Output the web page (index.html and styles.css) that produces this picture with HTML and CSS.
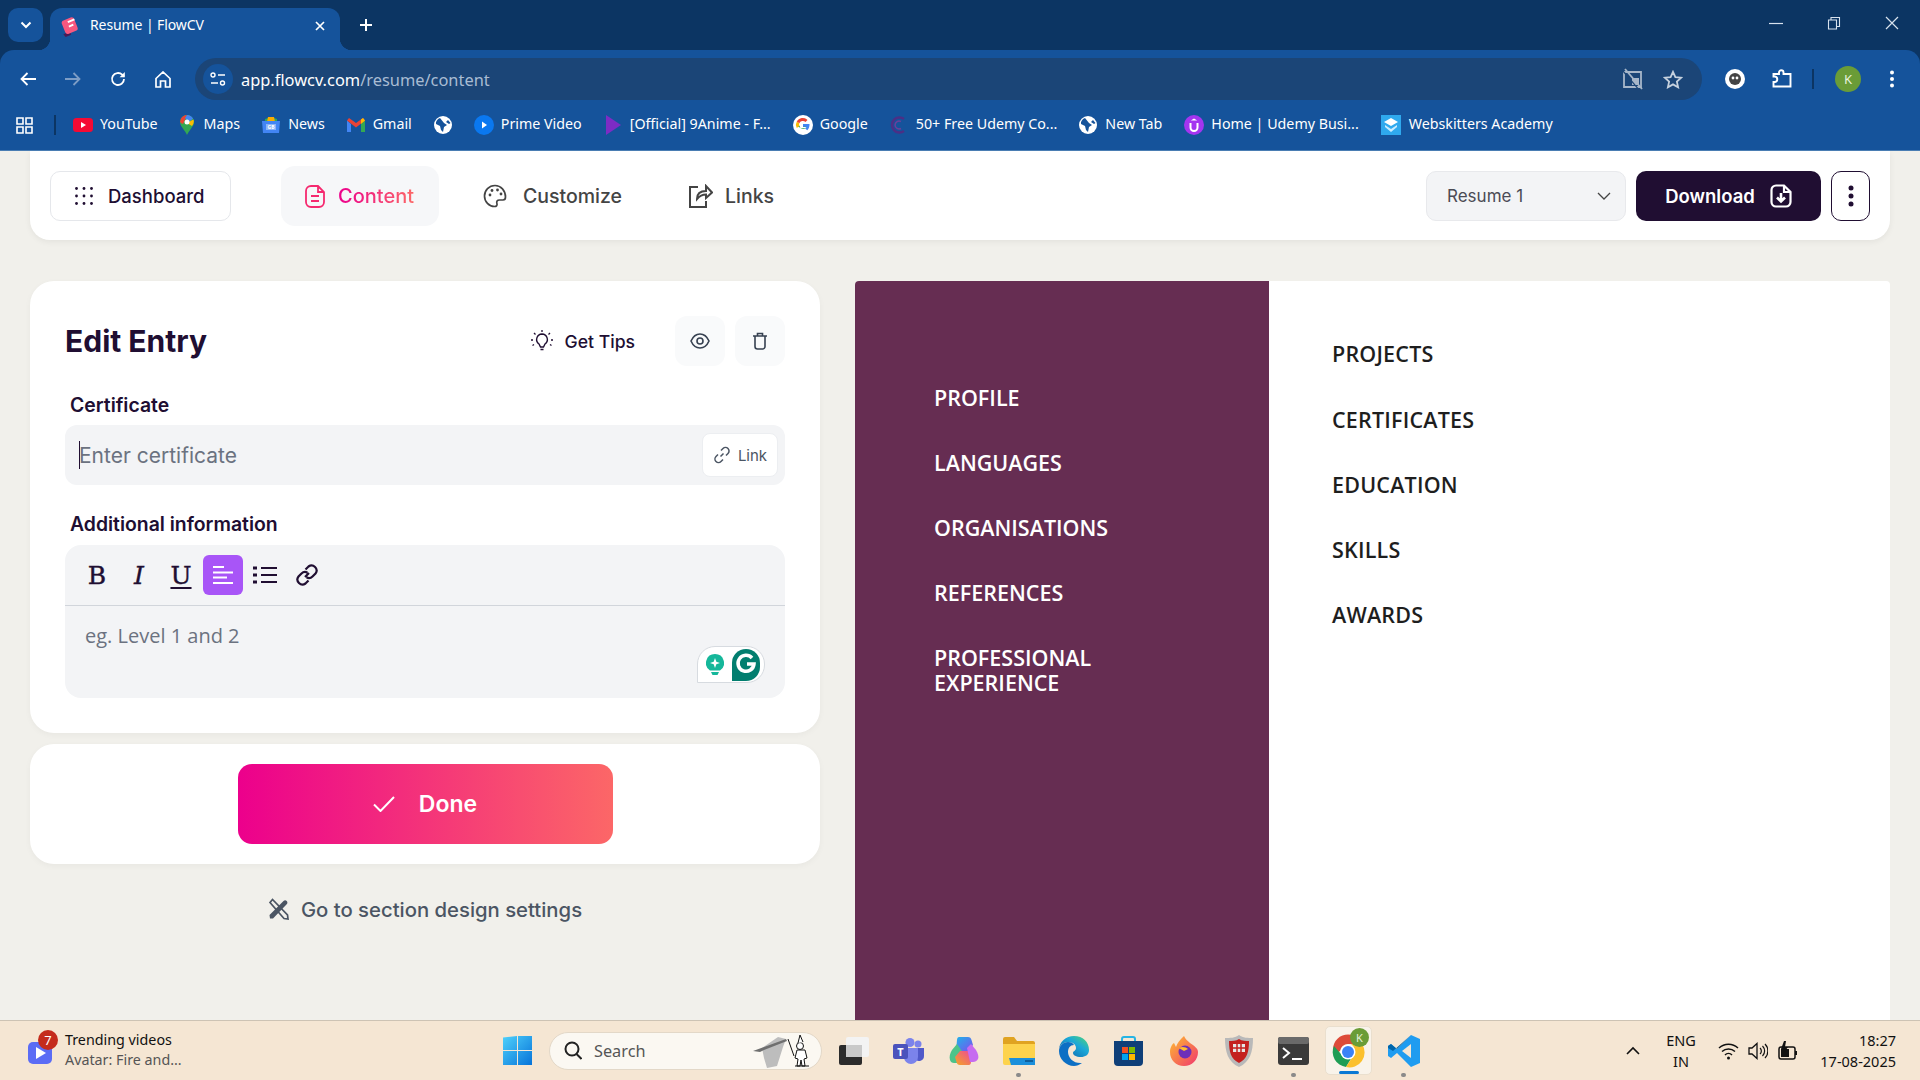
FILE: index.html
```html
<!DOCTYPE html>
<html lang="en">
<head>
<meta charset="utf-8">
<title>Resume | FlowCV</title>
<link rel="stylesheet" href="styles.css">
</head>
<body>
<div class="chrome">
  <div class="tabstrip">
    <div class="tabsearch"><svg width="12" height="8" viewBox="0 0 12 8"><path d="M1.500 1.500 6 6l4.500-4.500" fill="none" stroke="#fff" stroke-width="2"/></svg></div>
    <div class="tab">
      <svg class="favicon" width="20" height="22" viewBox="0 0 18 20"><path d="M3 17.500l6-2.500 1 3-5 2z" fill="#4a1a55"/><rect x="2.500" y="3" width="12" height="13" rx="2.500" transform="rotate(-22 9 9)" fill="#f8577f"/><path d="M7 6.500l6-2.500M8 10.500l4-1.700" stroke="#fff" stroke-width="1.800"/></svg>
      <span class="tabtitle">Resume | FlowCV</span>
      <svg class="tabclose" width="10" height="10" viewBox="0 0 10 10"><path d="M1 1l8 8M9 1 1 9" stroke="#fff" stroke-width="1.700"/></svg>
    </div>
    <svg class="newtab" width="14" height="14" viewBox="0 0 14 14"><path d="M7 1v12M1 7h12" stroke="#fff" stroke-width="2"/></svg>
    <div class="winctl">
      <svg width="14" height="14" viewBox="0 0 14 14"><path d="M0 7.500h14" stroke="#d8e2ee" stroke-width="1.200"/></svg>
      <svg width="14" height="14" viewBox="0 0 14 14"><path d="M1.500 4h8v9h-8zM4 4V1.500h8.500V10.500H9.500" fill="none" stroke="#d8e2ee" stroke-width="1.100"/></svg>
      <svg width="14" height="14" viewBox="0 0 14 14"><path d="M1 1l12 12M13 1 1 13" stroke="#d8e2ee" stroke-width="1.200"/></svg>
    </div>
  </div>
  <div class="toolbar">
    <div class="navslot"><svg width="16" height="14" viewBox="0 0 16 14"><path d="M7.500 1 1.500 7l6 6M2 7h14" fill="none" stroke="#fff" stroke-width="1.800"/></svg></div>
    <div class="navslot"><svg width="16" height="14" viewBox="0 0 16 14"><path d="M8.500 1l6 6-6 6M14 7H0" fill="none" stroke="#7d9dc5" stroke-width="1.800"/></svg></div>
    <div class="navslot"><svg width="16" height="16" viewBox="0 0 16 16"><path d="M14 8a6 6 0 1 1-1.800-4.300L14 5.500" fill="none" stroke="#fff" stroke-width="1.800"/><path d="M14.800 1v5.200H9.600z" fill="#fff"/></svg></div>
    <div class="navslot"><svg width="16" height="17" viewBox="0 0 16 17"><path d="M1 7.500 8 1l7 6.500V16h-4.500v-6h-5v6H1z" fill="none" stroke="#fff" stroke-width="1.700"/></svg></div>
    <div class="omnibox">
      <div class="siteinfo"><svg width="16" height="14" viewBox="0 0 16 14"><circle cx="3" cy="3" r="2" fill="none" stroke="#fff" stroke-width="1.400"/><path d="M8 3h7M1 11h7" stroke="#fff" stroke-width="1.500"/><circle cx="12.500" cy="11" r="2" fill="none" stroke="#fff" stroke-width="1.400"/></svg></div>
      <span class="url"><span class="urlhost">app.flowcv.com</span>/resume/content</span>
      <svg class="pip" width="22" height="22" viewBox="0 0 22 22"><path d="M2 4h17v15H2z" fill="none" stroke="#a7b6c9" stroke-width="1.800"/><path d="M10 10h7v7h-7z" fill="#a7b6c9"/><path d="M3 1l17 20" stroke="#a7b6c9" stroke-width="1.800"/><path d="M1 3l17 20" stroke="#1b4577" stroke-width="1.200"/></svg>
      <svg class="star" width="20" height="19" viewBox="0 0 20 19"><path d="M10 1.800l2.400 5.300 5.800.6-4.300 3.900 1.200 5.700L10 14.400l-5.100 2.900 1.200-5.700L1.800 7.700l5.800-.6z" fill="none" stroke="#c6d1de" stroke-width="1.800"/></svg>
    </div>
    <svg class="ext-g" width="20" height="20" viewBox="0 0 20 20"><circle cx="10" cy="10" r="10" fill="#fff"/><circle cx="10" cy="10" r="6" fill="#444"/><circle cx="8" cy="9" r="1.400" fill="#fff"/><circle cx="12" cy="9" r="1.400" fill="#fff"/></svg>
    <svg class="ext-p" width="20" height="20" viewBox="0 0 20 20"><path d="M1.500 5H7V3.500a2.200 2.200 0 0 1 4.500 0V5h7v12.500h-17V13H3a2.800 2.800 0 0 0 0-5.500H1.500z" fill="none" stroke="#fff" stroke-width="1.900"/></svg>
    <div class="tbsep"></div>
    <div class="avatar">K</div>
    <svg class="dots" width="6" height="18" viewBox="0 0 6 18"><circle cx="3" cy="2.500" r="2" fill="#fff"/><circle cx="3" cy="9" r="2" fill="#fff"/><circle cx="3" cy="15.500" r="2" fill="#fff"/></svg>
  </div>
  <div class="bookmarks">
    <svg class="apps" width="17" height="17" viewBox="0 0 17 17"><path d="M1 1h6v6H1zM10 1h6v6h-6zM1 10h6v6H1zM10 10h6v6h-6z" fill="none" stroke="#fff" stroke-width="1.600"/></svg>
    <div class="bmsep"></div>
    <div class="bmlist">
      <div class="bm bm-tight"><svg width="20" height="14" viewBox="0 0 20 14"><rect width="20" height="14" rx="3.500" fill="#f50a33"/><path d="M8 4l5 3-5 3z" fill="#fff"/></svg><span class="bmtext">YouTube</span></div>
      <div class="bm bm-wide"><svg width="14" height="20" viewBox="0 0 14 20"><path d="M7 20C5 15 0 11.500 0 7a7 7 0 0 1 14 0c0 4.500-5 8-7 13z" fill="#34a853"/><path d="M1 3.500A7 7 0 0 1 7 0l-4 9a7 7 0 0 1-3-2z" fill="#ea4335"/><path d="M7 0a7 7 0 0 1 6 3.500L9 7 5 3z" fill="#4285f4"/><path d="M13.500 4.500A7 7 0 0 1 12 11L7 8z" fill="#fbbc04"/><circle cx="7" cy="7" r="2.500" fill="#fff"/></svg><span class="bmtext">Maps</span></div>
      <div class="bm"><svg width="18" height="18" viewBox="0 0 18 18"><path d="M3 3l6-2 6 2v4H3z" fill="#34a853"/><path d="M6 1h6l1 5H5z" fill="#f9ab00"/><path d="M0 5h18l-1 12H1z" fill="#4285f4"/><path d="M4 8h10v6H4z" fill="#8ab4f8"/><text class="bmnews" x="9" y="13">GB</text></svg><span class="bmtext">News</span></div>
      <div class="bm"><svg width="18" height="14" viewBox="0 0 18 14"><path d="M0 2.500V14h4V6z" fill="#4285f4"/><path d="M14 6v8h4V2.500z" fill="#34a853"/><path d="M0 2.500 9 9.500l9-7L16 0 9 5 2 0z" fill="#ea4335"/><path d="M14 6l4-3.500L16 0l-2 1.500z" fill="#fbbc04"/></svg><span class="bmtext">Gmail</span></div>
      <div class="bm"><svg width="18" height="18" viewBox="0 0 18 18"><circle cx="9" cy="9" r="9" fill="#fff"/><path d="M6 2C3 3 1.500 6 2 8l4 2 1 4 2 2 1-5 3-2-3-2zM14 4l-2 2 3 2 1.500-1z" fill="#15539b"/></svg></div>
      <div class="bm bm-tight"><svg width="20" height="20" viewBox="0 0 20 20"><circle cx="10" cy="10" r="10" fill="#0a78f0"/><path d="M8 6.500l5 3.500-5 3.500z" fill="#fff"/></svg><span class="bmtext">Prime Video</span></div>
      <div class="bm"><svg width="18" height="20" viewBox="0 0 18 20"><path d="M2 0l15 10L2 20z" fill="#7d2cc4"/></svg><span class="bmtext">[Official] 9Anime - F...</span></div>
      <div class="bm bm-tight"><svg width="20" height="20" viewBox="0 0 20 20"><circle cx="10" cy="10" r="10" fill="#fff"/><path d="M16 9h-6v3h3.400a3.600 3.600 0 0 1-6.800-1L3.500 8.500A6.600 6.600 0 0 0 16 9z" fill="#34a853"/><path d="M16.500 9H10v2.800h3.600c-.3.800-.8 1.300-1.500 1.800l2.200 1.700c1.500-1.400 2.400-3.800 2.200-6.300z" fill="#4285f4"/><path d="M3.800 6.500a6.600 6.600 0 0 0 0 6.400L6.300 11a3.800 3.800 0 0 1 0-2.700z" fill="#fbbc04"/><path d="M3.800 6.500A6.600 6.600 0 0 1 14.500 5l-2 2a3.800 3.800 0 0 0-6.200 1.300z" fill="#ea4335"/></svg><span class="bmtext">Google</span></div>
      <div class="bm"><svg width="18" height="20" viewBox="0 0 18 20"><path d="M14 4a7.500 7.500 0 1 0 0 12" fill="none" stroke="#4b2f86" stroke-width="2.500"/><path d="M11 6.500a4 4 0 1 0 0 7" fill="none" stroke="#6a3f9c" stroke-width="1.500"/></svg><span class="bmtext">50+ Free Udemy Co...</span></div>
      <div class="bm"><svg width="18" height="18" viewBox="0 0 18 18"><circle cx="9" cy="9" r="9" fill="#fff"/><path d="M6 2C3 3 1.500 6 2 8l4 2 1 4 2 2 1-5 3-2-3-2zM14 4l-2 2 3 2 1.500-1z" fill="#15539b"/></svg><span class="bmtext">New Tab</span></div>
      <div class="bm bm-tight"><svg width="20" height="20" viewBox="0 0 20 20"><circle cx="10" cy="10" r="10" fill="#a435f0"/><path d="M6.500 8v4.500a3.500 3.500 0 0 0 7 0V8" fill="none" stroke="#fff" stroke-width="2"/><path d="M10 3.500 6.800 5.500h6.400z" fill="#fff"/></svg><span class="bmtext">Home | Udemy Busi...</span></div>
      <div class="bm"><svg width="20" height="20" viewBox="0 0 20 20"><rect width="20" height="20" fill="#2fa9ee"/><path d="M10 3l7 4-7 4-7-4z" fill="#fff"/><path d="M4 10l6 4 6-4v2l-6 5-6-5z" fill="#c9ecff"/></svg><span class="bmtext">Webskitters Academy</span></div>
    </div>
  </div>
</div>

<main class="page">
  <header class="topbar">
    <button class="dash">
      <svg width="18" height="18" viewBox="0 0 18 18"><g fill="#200e32"><circle cx="1.500" cy="1.500" r="1.400"/><circle cx="9" cy="1.500" r="1.400"/><circle cx="16.500" cy="1.500" r="1.400"/><circle cx="1.500" cy="9" r="1.400"/><circle cx="9" cy="9" r="1.400"/><circle cx="16.500" cy="9" r="1.400"/><circle cx="1.500" cy="16.500" r="1.400"/><circle cx="9" cy="16.500" r="1.400"/><circle cx="16.500" cy="16.500" r="1.400"/></g></svg>
      <span>Dashboard</span>
    </button>
    <nav class="tabs">
      <div class="navtab navtab-active">
        <svg width="20" height="23" viewBox="0 0 20 23"><path d="M13 1H6a5 5 0 0 0-5 5v11a5 5 0 0 0 5 5h8a5 5 0 0 0 5-5V7zM6 11h8M6 16h8M13 1v6h6" fill="none" stroke="#f5296f" stroke-width="1.800"/></svg>
        <span class="gradtext">Content</span>
      </div>
      <div class="navtab">
        <svg width="24" height="24" viewBox="0 0 24 24"><path d="M12 1.500C6 1.500 1.500 6.300 1.500 12S6 22.500 11.500 22.500c2 0 3-1.300 2.400-3-.6-1.800.2-3.500 2.600-3.500H20c1.600 0 2.500-1.200 2.500-3C22.500 6.500 18 1.500 12 1.500z" fill="none" stroke="#444" stroke-width="1.700"/><circle cx="7" cy="11" r="1.400" fill="#444"/><circle cx="9" cy="6.500" r="1.400" fill="#444"/><circle cx="14.500" cy="6" r="1.400" fill="#444"/><circle cx="18" cy="10" r="1.400" fill="#444"/></svg>
        <span>Customize</span>
      </div>
      <div class="navtab navtab-links">
        <svg width="25" height="25" viewBox="0 0 25 25"><path d="M10 3H2v20h16v-6" fill="none" stroke="#444" stroke-width="2"/><path d="M9 15c0-5 3-8 9-8V2l6 6.500L18 14V10.500c-4 0-6 1-9 4.500z" fill="none" stroke="#444" stroke-width="2"/></svg>
        <span>Links</span>
      </div>
    </nav>
    <div class="actions">
      <div class="select"><span>Resume 1</span><svg width="14" height="8" viewBox="0 0 14 8"><path d="M1 1l6 6 6-6" fill="none" stroke="#444" stroke-width="1.300"/></svg></div>
      <button class="download"><span>Download</span>
        <svg width="22" height="24" viewBox="0 0 22 24"><path d="M14 1.500H6A4.500 4.500 0 0 0 1.500 6v12A4.500 4.500 0 0 0 6 22.500h10a4.500 4.500 0 0 0 4.500-4.500V8zM14 1.500V8h6.500" fill="none" stroke="#fff" stroke-width="2.200"/><path d="M11 9v8M7 13.500l4 4 4-4" fill="none" stroke="#fff" stroke-width="2.600"/></svg>
      </button>
      <button class="kebab"><svg width="6" height="22" viewBox="0 0 6 22"><circle cx="3" cy="3" r="2.500" fill="#200e32"/><circle cx="3" cy="11" r="2.500" fill="#200e32"/><circle cx="3" cy="19" r="2.500" fill="#200e32"/></svg></button>
    </div>
  </header>

  <div class="workspace">
    <section class="leftcol">
      <div class="card editcard">
        <div class="edithead">
          <h1 class="edittitle">Edit Entry</h1>
          <div class="tips">
            <svg width="22" height="22" viewBox="0 0 22 22"><path d="M11 4a5.500 5.500 0 0 0-3 10l1.500 3h3L14 14a5.500 5.500 0 0 0-3-10zM9.500 19.500h3" fill="none" stroke="#200e32" stroke-width="1.400"/><path d="M11 0v2M3 3l1.500 1.500M19 3l-1.500 1.500M0 10h2M20 10h2M1.500 15.500 3 14.500M20.500 15.500 19 14.500" stroke="#200e32" stroke-width="1.300"/></svg>
            <span>Get Tips</span>
          </div>
          <button class="iconbtn"><svg width="20" height="16" viewBox="0 0 20 16"><path d="M1 8c2-4.500 5.300-7 9-7s7 2.500 9 7c-2 4.500-5.300 7-9 7s-7-2.500-9-7z" fill="none" stroke="#374151" stroke-width="1.600"/><circle cx="10" cy="8" r="3" fill="none" stroke="#374151" stroke-width="1.600"/></svg></button>
          <button class="iconbtn"><svg width="16" height="18" viewBox="0 0 16 18"><path d="M1 4h14M5.500 4V1.500h5V4M3 4v10.500A2.500 2.500 0 0 0 5.500 17h5a2.500 2.500 0 0 0 2.500-2.500V4" fill="none" stroke="#374151" stroke-width="1.600"/></svg></button>
        </div>
        <label class="fieldlabel">Certificate</label>
        <div class="inputrow">
          <span class="caret"></span><span class="placeholder">Enter certificate</span>
          <button class="linkbtn"><svg width="18" height="18" viewBox="0 0 18 18"><path d="M7.500 10.500 10.500 7.500M8 4.500l2-2a3.500 3.500 0 0 1 5 5l-2 2M10 13.500l-2 2a3.500 3.500 0 0 1-5-5l2-2" fill="none" stroke="#4b5563" stroke-width="1.500"/></svg><span>Link</span></button>
        </div>
        <label class="fieldlabel fieldlabel-second">Additional information</label>
        <div class="editor">
          <div class="edtools">
            <div class="tool tool-b">B</div>
            <div class="tool tool-i">I</div>
            <div class="tool tool-u">U</div>
            <div class="tool tool-active"><svg width="22" height="22" viewBox="0 0 22 22"><path d="M1 3h11M1 8.500h20M1 13.500h14M1 19h20" stroke="#fff" stroke-width="2.200"/></svg></div>
            <div class="tool"><svg width="24" height="20" viewBox="0 0 24 20"><path d="M0 3h4M0 10h4M0 17h4" stroke="#200e32" stroke-width="3"/><path d="M8 3h16M8 10h16M8 17h16" stroke="#200e32" stroke-width="2"/></svg></div>
            <div class="tool"><svg width="24" height="24" viewBox="0 0 24 24"><path d="M10 14l4-4M10.500 6.500l3-3a5 5 0 0 1 7 7l-3 3a5 5 0 0 1-6 .8M13.500 17.500l-3 3a5 5 0 0 1-7-7l3-3a5 5 0 0 1 6-.8" fill="none" stroke="#200e32" stroke-width="2.200"/></svg></div>
          </div>
          <div class="edbody">
            <span class="placeholder placeholder-body">eg. Level 1 and 2</span>
            <div class="grammarly">
              <svg width="18" height="22" viewBox="0 0 18 22"><path d="M9 0a9 9 0 0 0-5 16.500h10A9 9 0 0 0 9 0z" fill="#15b79a"/><path d="M9 4l1.300 3.700L14 9l-3.700 1.300L9 14l-1.300-3.700L4 9l3.700-1.300z" fill="#fff"/><path d="M5 18h8l-1.500 3h-5z" fill="#15b79a"/></svg>
              <div class="gmark"><svg width="28" height="32" viewBox="0 0 28 32"><path d="M0 32V14a14 14 0 0 1 28 0v4a14 14 0 0 1-14 14z" fill="#027e6f"/><path d="M20 9a8 8 0 1 0 2 6h-7" fill="none" stroke="#fff" stroke-width="3.500"/></svg></div>
            </div>
          </div>
        </div>
      </div>
      <div class="card donecard">
        <button class="done"><svg width="22" height="16" viewBox="0 0 22 16"><path d="M1 8.500 7.500 15 21 1" fill="none" stroke="#fff" stroke-width="2"/></svg><span>Done</span></button>
      </div>
      <div class="sectionlink">
        <svg width="21" height="22" viewBox="0 0 21 22"><path d="M2 4.500 4.500 1.500l15 15.500.5 4-4-.5z" fill="none" stroke="#4b5563" stroke-width="1.700"/><path d="M2 20.500 1.500 17 15.500 3c1-1 2.300-1 3.200 0s1 2.300 0 3.200L5 20.500z" fill="#4b5563"/></svg>
        <span>Go to section design settings</span>
      </div>
    </section>
    <section class="resume">
      <div class="resleft">
        <div class="reshead">PROFILE</div>
        <div class="reshead">LANGUAGES</div>
        <div class="reshead">ORGANISATIONS</div>
        <div class="reshead">REFERENCES</div>
        <div class="reshead">PROFESSIONAL EXPERIENCE</div>
      </div>
      <div class="resright">
        <div class="reshead">PROJECTS</div>
        <div class="reshead">CERTIFICATES</div>
        <div class="reshead">EDUCATION</div>
        <div class="reshead">SKILLS</div>
        <div class="reshead">AWARDS</div>
      </div>
    </section>
  </div>
</main>

<footer class="taskbar">
  <div class="widget">
    <div class="widgeticon">
      <svg width="24" height="22" viewBox="0 0 24 22"><rect width="24" height="22" rx="5" fill="#5b6cf5"/><path d="M8 5l10 6-10 6z" fill="#fff"/></svg>
      <span class="badge">7</span>
    </div>
    <div class="widgettext"><div class="wt1">Trending videos</div><div class="wt2">Avatar: Fire and...</div></div>
  </div>
  <div class="center">
    <svg class="winlogo" width="29" height="29" viewBox="0 0 29 29"><defs><linearGradient id="w" x1="0" y1="0" x2="1" y2="1"><stop offset="0" stop-color="#4fd1fb"/><stop offset="1" stop-color="#0673d9"/></linearGradient></defs><path d="M0 1.500 14 0v14H0zM15 0h14v14H15zM0 15h14v14H0zM15 15h14v14H15z" fill="url(#w)"/></svg>
    <div class="searchbox">
      <svg width="18" height="19" viewBox="0 0 18 19"><circle cx="8" cy="8" r="6.500" fill="none" stroke="#222" stroke-width="2"/><path d="M12.500 13 17.500 18" stroke="#222" stroke-width="2"/></svg>
      <span>Search</span>
      <svg class="searchart" width="58" height="34" viewBox="0 0 58 34"><path d="M10 14 26 3l8 2-3 8-6 19-10 2-3-10z" fill="#bdbdbd"/><path d="M1 17 34 5l1 2L12 16l-4 2z" fill="#6f6f6f"/><path d="M36 5l6 17" stroke="#111" stroke-width="1"/><circle cx="48" cy="12" r="3.500" fill="#fff" stroke="#111"/><path d="M46 9l2-8 3 7" fill="#fff" stroke="#111"/><path d="M45 16l-2 8 3 1-1 7h3l1-6 1 6h3l-1-7 3-1-2-8z" fill="#fff" stroke="#111"/><path d="M43 32h14" stroke="#111"/></svg>
    </div>
    <div class="taskicons">
      <div class="ti"><svg width="30" height="28" viewBox="0 0 30 28"><rect y="8" width="23" height="20" rx="2" fill="#2b2b2b"/><rect x="7" width="23" height="20" rx="2" fill="#f3f3f3"/><rect x="7" y="8" width="16" height="12" fill="#c9c9c9"/></svg></div>
      <div class="ti"><svg width="31" height="26" viewBox="0 0 31 26"><circle cx="25" cy="6" r="3.500" fill="#7b83eb"/><circle cx="17" cy="4.500" r="4.500" fill="#7b83eb"/><path d="M20 10h11v8a5 5 0 0 1-9 3z" fill="#5059c9"/><path d="M8 10h17v9a7 7 0 0 1-14 0z" fill="#7b83eb"/><rect y="6" width="15" height="15" rx="2" fill="#4b53bc"/><text class="tileter" x="7.500" y="17.500">T</text></svg></div>
      <div class="ti"><svg width="30" height="30" viewBox="0 0 30 30"><defs><linearGradient id="co1" x1="0" y1="0" x2="1" y2="1"><stop offset="0" stop-color="#1fb3e8"/><stop offset="1" stop-color="#7b4ff0"/></linearGradient><linearGradient id="co2" x1="0" y1="1" x2="1" y2="0"><stop offset="0" stop-color="#f5a623"/><stop offset="1" stop-color="#ec4899"/></linearGradient></defs><path d="M10 1h9c2 0 3 1 3.500 3L24 9l-5 6H7l1-11c0-2 1-3 2-3z" fill="url(#co1)"/><path d="M8 8 3 14c-2 3-3 7-2 10 .5 2 2 3 4 3h4l6-9z" fill="#4cc38a"/><path d="M20 29h-9c-2 0-3-1-3.500-3L6 21l5-6h12l-1 11c0 2-1 3-2 3z" fill="url(#co2)"/><path d="M22 8l5 6c2 3 3 7 2 9-1 2-3 3-5 3h-3l-3-14z" fill="#c66bf0"/></svg></div>
      <div class="ti ti-dot"><svg width="32" height="28" viewBox="0 0 32 28"><path d="M0 2a2 2 0 0 1 2-2h9l3 4h16a2 2 0 0 1 2 2v4H0z" fill="#e0a321"/><path d="M0 7h32v19a2 2 0 0 1-2 2H2a2 2 0 0 1-2-2z" fill="#fdd34d"/><path d="M6 21h26v7H8z" fill="#1b8fdb"/><path d="M22 24h8" stroke="#0a4f8a" stroke-width="1.500"/></svg></div>
      <div class="ti"><svg width="30" height="30" viewBox="0 0 30 30"><defs><linearGradient id="ed" x1="0" y1="1" x2="1" y2="0"><stop offset="0" stop-color="#0c59a4"/><stop offset=".6" stop-color="#1ba8d8"/><stop offset="1" stop-color="#54d96d"/></linearGradient></defs><path d="M15 0c9 0 15 6 15 14 0 5-4 7-8 7-5 0-8-2-8-4 0-2 3-2 3-5 0-4-4-6-8-6-5 0-9 4-9 8C0 6 7 0 15 0z" fill="url(#ed)"/><path d="M0 15c0-5 4-9 9-9 3 0 5 1 6 3-4 0-6 3-6 7 0 6 6 12 14 11-3 2-5 3-8 3C7 30 0 23 0 15z" fill="#0c6fc4"/></svg></div>
      <div class="ti"><svg width="29" height="30" viewBox="0 0 29 30"><path d="M8 5V3a2 2 0 0 1 2-2h9a2 2 0 0 1 2 2v2" fill="none" stroke="#26b4e4" stroke-width="2"/><path d="M0 5h29v21a4 4 0 0 1-4 4H4a4 4 0 0 1-4-4z" fill="#0f3f78"/><path d="M8 11h6v6H8z" fill="#f25022"/><path d="M15 11h6v6h-6z" fill="#7fba00"/><path d="M8 18h6v6H8z" fill="#00a4ef"/><path d="M15 18h6v6h-6z" fill="#ffb900"/></svg></div>
      <div class="ti"><svg width="28" height="30" viewBox="0 0 28 30"><defs><linearGradient id="ff" x1="0" y1="0" x2="1" y2="1"><stop offset="0" stop-color="#ffbd2e"/><stop offset="1" stop-color="#f0366f"/></linearGradient></defs><path d="M14 30C6 30 0 24 0 16 0 12 2 8 4 7l2 4c1-4 4-7 8-11 1 3 4 5 6 7 4 3 8 5 8 9 0 8-6 14-14 14z" fill="url(#ff)"/><circle cx="15" cy="16" r="6.500" fill="#6d2fb8"/><path d="M9 12c3-2 7-1 9 1l-4 2z" fill="#ffbd2e"/></svg></div>
      <div class="ti"><svg width="28" height="32" viewBox="0 0 28 32"><path d="M14 0c4 3 9 3 14 3 0 14-3 24-14 29C3 27 0 17 0 3c5 0 10 0 14-3z" fill="#b9b9b9"/><path d="M14 4c3 2 7 2 10 2 0 11-2 18-10 22C6 24 4 17 4 6c3 0 7 0 10-2z" fill="#c4201f"/><path d="M8 9h12v8H8z" fill="#e6e6e6"/><path d="M12 9v8M16 9v8M8 13h12" stroke="#c4201f" stroke-width="1.500"/></svg></div>
      <div class="ti ti-dot"><svg width="31" height="28" viewBox="0 0 31 28"><rect width="31" height="28" rx="3" fill="#3a3a3a"/><rect width="31" height="7" rx="2" fill="#6a6a6a"/><path d="M5 11l6 5-6 5" fill="none" stroke="#fff" stroke-width="2"/><path d="M14 22h10" stroke="#fff" stroke-width="2"/></svg></div>
      <div class="ti ti-active"><svg width="36" height="36" viewBox="0 0 36 36"><path d="M3 21 A15 15 0 0 1 31 10 H17 a8 8 0 0 0-8 7z" fill="#dd4b39"/><path d="M3 12a15 15 0 0 0 12 21l6-10a8 8 0 0 1-11-3z" fill="#1f9d55"/><path d="M31 10a15 15 0 0 1-16 23l7-11a8 8 0 0 0-2-12z" fill="#fbc02d"/><circle cx="17" cy="18" r="7.500" fill="#fff"/><circle cx="17" cy="18" r="6" fill="#3b82f6"/></svg><span class="kbadge">K</span></div>
      <div class="ti ti-dot"><svg width="32" height="32" viewBox="0 0 32 32"><path d="M23 0 9 14 3 9l-3 2v10l3 2 6-5 14 14 9-4V4z" fill="#1f9cf0"/><path d="M23 9v14l-9-7z" fill="#f5e6d3"/><path d="M23 0 9 14 3 9 0 11v2l5 3 18-16z" fill="#0065a9"/></svg></div>
    </div>
  </div>
  <div class="tray">
    <svg class="traycaret" width="14" height="9" viewBox="0 0 14 9"><path d="M1 8l6-6 6 6" fill="none" stroke="#111" stroke-width="1.600"/></svg>
    <div class="lang"><div>ENG</div><div>IN</div></div>
    <svg class="trayi" width="21" height="18" viewBox="0 0 21 18"><path d="M1 6a14 14 0 0 1 19 0M4 9.500a9.500 9.500 0 0 1 13 0M7 13a5 5 0 0 1 7 0" fill="none" stroke="#111" stroke-width="1.500"/><circle cx="10.500" cy="16" r="1.500" fill="#111"/></svg>
    <svg class="trayi trayi-s" width="20" height="18" viewBox="0 0 20 18"><path d="M1 6h3l5-4.500v15L4 12H1z" fill="none" stroke="#111" stroke-width="1.300"/><path d="M12 6a4 4 0 0 1 0 6M14.500 4a7 7 0 0 1 0 10M17 2a10 10 0 0 1 0 14" fill="none" stroke="#111" stroke-width="1.200"/></svg>
    <svg class="trayi trayi-b" width="20" height="20" viewBox="0 0 20 20"><rect x="1" y="6" width="16" height="12" rx="2" fill="#f5e6d3" stroke="#111" stroke-width="1.500"/><rect x="3" y="8" width="8" height="8" fill="#111"/><path d="M18 10v4" stroke="#111" stroke-width="2"/><path d="M6 0 3 8h3l-1 5 5-7H7l1-6z" fill="#111"/></svg>
    <div class="clock"><div>18:27</div><div>17-08-2025</div></div>
  </div>
</footer>
</body>
</html>
```

FILE: styles.css
```css
* { box-sizing: border-box; }
html, body { margin: 0; height: 100%; }
body {
  width: 1920px; height: 1080px; overflow: hidden;
  display: flex; flex-direction: column;
  background: #f1f0eb;
  font-family: "Inter", "Liberation Sans", sans-serif;
  color: #200e32;
}
button { font-family: inherit; border: 0; padding: 0; background: none; }
svg { display: block; flex: none; }

/* browser chrome */
.chrome { height: 151px; flex: none; background: #0c3563; border-bottom: 1px solid #4a7db3; font-family: "Noto Sans", sans-serif; color: #fff; }
.tabstrip { height: 50px; display: flex; align-items: flex-start; padding: 8px 0 0 8px; }
.tabsearch { width: 35px; height: 34px; border-radius: 10px; background: #15539b; display: flex; align-items: center; justify-content: center; }
.tab { position: relative; width: 290px; height: 42px; margin-left: 7px; background: #15539b; border-radius: 12px 12px 0 0; display: flex; align-items: center; padding: 0 15px 6px 10px; }
.tab::before, .tab::after { content: ""; position: absolute; bottom: 0; width: 12px; height: 12px; }
.tab::before { left: -12px; background: radial-gradient(circle at 0 0, transparent 12px, #15539b 12.5px); }
.tab::after { right: -12px; background: radial-gradient(circle at 100% 0, transparent 12px, #15539b 12.5px); }
.tabtitle { font-size: 14px; line-height: 18px; margin: -2px 0 0 10px; flex: 1; letter-spacing: -.1px; }
.newtab { margin: 10px 0 0 19px; }
.winctl { margin-left: auto; display: flex; gap: 44px; padding: 8px 21px 0 0; }
.toolbar { height: 50px; background: #15539b; border-radius: 14px 14px 0 0; display: flex; align-items: flex-start; padding: 8px 0 0 5px; }
.navslot { width: 45px; height: 42px; display: flex; align-items: center; justify-content: center; }
.omnibox { width: 1507px; height: 42px; margin-left: 10px; border-radius: 21px; background: #1b4577; display: flex; align-items: center; padding: 0 19px 0 8px; }
.siteinfo { width: 30px; height: 30px; border-radius: 50%; background: #15539b; display: flex; align-items: center; justify-content: center; }
.url { margin-left: 8px; font-size: 16.4px; color: #a9bcd3; }
.urlhost { color: #fff; }
.pip { margin-left: auto; }
.star { margin-left: 19px; }
.ext-g { margin: 11px 0 0 23px; }
.ext-p { margin: 11px 0 0 27px; }
.tbsep { width: 2px; height: 20px; margin: 11px 0 0 20px; background: #0c3563; }
.avatar { width: 26px; height: 26px; margin: 8px 0 0 21px; border-radius: 50%; background: #6a9c37; font-size: 13px; display: flex; align-items: center; justify-content: center; color: #e8f2dc; }
.dots { margin: 12px 0 0 28px; }
.bookmarks { height: 50px; background: #15539b; display: flex; align-items: center; padding-left: 16px; }
.bmsep { width: 2px; height: 20px; margin-left: 21px; background: #0c3563; }
.bmlist { display: flex; align-items: center; gap: 22px; margin-left: 17px; }
.bm { display: flex; align-items: center; gap: 8px; }
.bm-tight { gap: 7px; }
.bm-wide { gap: 10px; }
.bmtext { font-size: 14.25px; line-height: 18px; margin-top: -2px; white-space: nowrap; }
.bmnews { font: 700 5px "Noto Sans", sans-serif; fill: #fff; text-anchor: middle; }
.tileter { font: 700 11px "Noto Sans", sans-serif; fill: #fff; text-anchor: middle; }

/* page */
.page { flex: 1; min-height: 0; overflow: hidden; padding: 0 30px; }
.topbar { height: 89px; background: #fff; border-radius: 0 0 20px 20px; box-shadow: 0 2px 6px rgba(0,0,0,.06); display: flex; align-items: center; padding: 1px 20px 0; }
.dash { width: 181px; height: 50px; border: 1px solid #e5e7eb; border-radius: 10px; display: flex; align-items: center; gap: 15px; padding-left: 24px; font-size: 18.5px; font-weight: 500; color: #200e32; }
.tabs { display: flex; align-items: center; gap: 20px; margin-left: 50px; }
.navtab { height: 60px; border-radius: 14px; display: flex; align-items: center; gap: 16px; padding: 0 24px; font-size: 19.5px; font-weight: 500; color: #444; }
.navtab-active { background: #f6f7f9; gap: 13px; font-size: 20px; padding-right: 25px; }
.navtab-links { gap: 12px; padding-left: 22px; }
.gradtext { background: linear-gradient(90deg, #ec008c, #fc6767); -webkit-background-clip: text; background-clip: text; color: transparent; }
.actions { margin-left: auto; display: flex; gap: 10px; }
.select { width: 200px; height: 50px; border-radius: 10px; border: 1px solid #e8e9ec; background: #f3f4f6; display: flex; align-items: center; justify-content: space-between; padding: 0 14px 0 20px; font-size: 17px; color: #4b4b55; }
.download { width: 185px; height: 50px; border-radius: 10px; background: #200e32; display: flex; align-items: center; justify-content: center; gap: 15px; color: #fff; font-size: 18.5px; font-weight: 600; }
.kebab { width: 39px; height: 50px; border-radius: 10px; border: 1px solid #200e32; display: flex; align-items: center; justify-content: center; }

.workspace { display: flex; gap: 35px; margin-top: 41px; height: 780px; }
.leftcol { width: 790px; flex: none; }
.card { background: #fff; border-radius: 24px; box-shadow: 0 2px 6px rgba(0,0,0,.04); }
.editcard { height: 452px; padding: 35px; }
.edithead { display: flex; align-items: center; height: 50px; }
.edittitle { flex: 1; margin: 0; font-size: 30px; line-height: 50px; font-weight: 700; color: #200e32; }
.tips { display: flex; align-items: center; gap: 12px; margin-right: 40px; font-size: 17.6px; font-weight: 500; }
.iconbtn { width: 50px; height: 50px; border-radius: 12px; background: #f9fafb; margin-left: 10px; display: flex; align-items: center; justify-content: center; }
.tips + .iconbtn { margin-left: 0; }
.fieldlabel { display: block; margin: 27px 0 8px 5px; font-size: 19.4px; line-height: 24px; font-weight: 600; color: #200e32; }
.fieldlabel-second { margin: 27px 0 9px 5px; }
.inputrow { height: 60px; border-radius: 12px; background: #f3f4f6; display: flex; align-items: center; padding: 0 7px 0 14px; }
.caret { width: 1px; height: 28px; background: #200e32; margin-right: -1px; }
.placeholder { font-size: 21px; color: #6b7280; }
.linkbtn { margin-left: auto; width: 76px; height: 44px; border-radius: 8px; background: #fff; border: 1px solid #eceef1; display: flex; align-items: center; justify-content: center; gap: 7px; font-size: 15px; color: #4b5563; }
.editor { height: 153px; border-radius: 16px; background: #f3f4f6; }
.edtools { height: 61px; border-bottom: 1px solid #d1d5db; display: flex; gap: 2px; padding: 10px 0 0 12px; }
.tool { width: 40px; height: 40px; border-radius: 6px; display: flex; align-items: center; justify-content: center; color: #200e32; font-family: "DejaVu Serif", serif; font-size: 25px; line-height: 1; -webkit-text-stroke: .4px #200e32; }
.tool-i { font-style: italic; }
.tool-u { text-decoration: underline; text-decoration-thickness: 2px; text-underline-offset: 3px; }
.tool-active { background: #a855f7; }
.edbody { position: relative; height: 92px; padding: 16px 20px; }
.placeholder-body { font-family: "Open Sans", sans-serif; font-size: 20px; line-height: 27px; display: block; }
.grammarly { position: absolute; right: 20px; bottom: 15px; width: 68px; height: 37px; background: #fff; border: 1px solid #d7dbe0; border-radius: 18px 18px 18px 0; display: flex; align-items: center; gap: 8px; padding-left: 8px; }
.donecard { height: 120px; margin-top: 11px; padding: 20px 0; display: flex; justify-content: center; }
.done { width: 375px; height: 80px; border-radius: 14px; background: linear-gradient(90deg, #ec008c, #fc6767); display: flex; align-items: center; justify-content: center; gap: 24px; color: #fff; font-size: 23px; font-weight: 600; }
.sectionlink { margin-top: 30px; height: 30px; display: flex; align-items: center; justify-content: center; gap: 12px; font-size: 20.3px; font-weight: 500; color: #4b5563; }
.resume { flex: 1; display: flex; overflow: hidden; border-radius: 4px 4px 0 0; background: #fff; height: 100%; }
.resleft { width: 414px; flex: none; background: #662d52; color: #fff; padding: 104px 0 0 79px; display: flex; flex-direction: column; gap: 40px; }
.resright { padding: 60px 0 0 63px; display: flex; flex-direction: column; gap: 40px; color: #1e1e1e; letter-spacing: .2px; }
.resright .reshead:first-child { margin-bottom: 1px; }
.reshead { width: 220px; font-family: "Open Sans", sans-serif; font-size: 21.5px; font-weight: 600; line-height: 25px; }

/* taskbar */
.taskbar { height: 60px; flex: none; background: #f5e6d3; border-top: 1px solid #cdc3b4; display: flex; align-items: center; padding-left: 28px; font-family: "Noto Sans", sans-serif; color: #111; }
.widget { width: 475px; display: flex; align-items: center; gap: 13px; }
.widgeticon { position: relative; margin-top: 5px; }
.badge { position: absolute; left: 10px; top: -12px; width: 20px; height: 20px; border-radius: 50%; background: #c42b1c; color: #fff; font-size: 13px; display: flex; align-items: center; justify-content: center; }
.widgettext { margin-top: -2px; }
.wt1 { font-size: 14.3px; line-height: 20px; }
.wt2 { font-size: 14.3px; line-height: 20px; color: #555; }
.center { display: flex; align-items: center; }
.searchbox { width: 273px; height: 38px; margin-left: 17px; border-radius: 19px; background: #fbf8f2; border: 1px solid #e3d8c8; display: flex; align-items: center; padding-left: 14px; gap: 12px; font-size: 16.3px; color: #555; position: relative; }
.searchart { position: absolute; right: 11px; top: 1px; }
.taskicons { display: flex; margin-left: 4px; }
.ti { position: relative; width: 55px; height: 59px; display: flex; align-items: center; justify-content: center; }
.ti-dot::after { content: ""; position: absolute; left: 50%; bottom: 3px; width: 5px; height: 4px; margin-left: -2.500px; border-radius: 2px; background: #8a8a8a; }
.ti-active::before { content: ""; position: absolute; left: 4px; right: 4px; top: 5px; bottom: 5px; background: #f9f3ea; border: 1px solid #eadfce; border-radius: 5px; }
.ti-active svg { position: relative; margin-top: 2px; }
.ti-active::after { content: ""; position: absolute; left: 50%; bottom: 6px; width: 20px; height: 3px; margin-left: -10px; border-radius: 2px; background: #0b78d4; }
.kbadge { position: absolute; left: 29px; top: 7px; width: 19px; height: 19px; border-radius: 50%; background: #6a9c37; color: #e8f2dc; font-size: 11px; display: flex; align-items: center; justify-content: center; }
.tray { margin-left: auto; display: flex; align-items: center; padding-right: 24px; font-size: 14.5px; }
.traycaret { margin-right: 21px; }
.lang { width: 40px; text-align: center; line-height: 21px; }
.trayi { margin-left: 17px; }
.trayi-s { margin-left: 9px; }
.trayi-b { margin-left: 10px; }
.clock { width: 98px; text-align: right; line-height: 21px; }
```
